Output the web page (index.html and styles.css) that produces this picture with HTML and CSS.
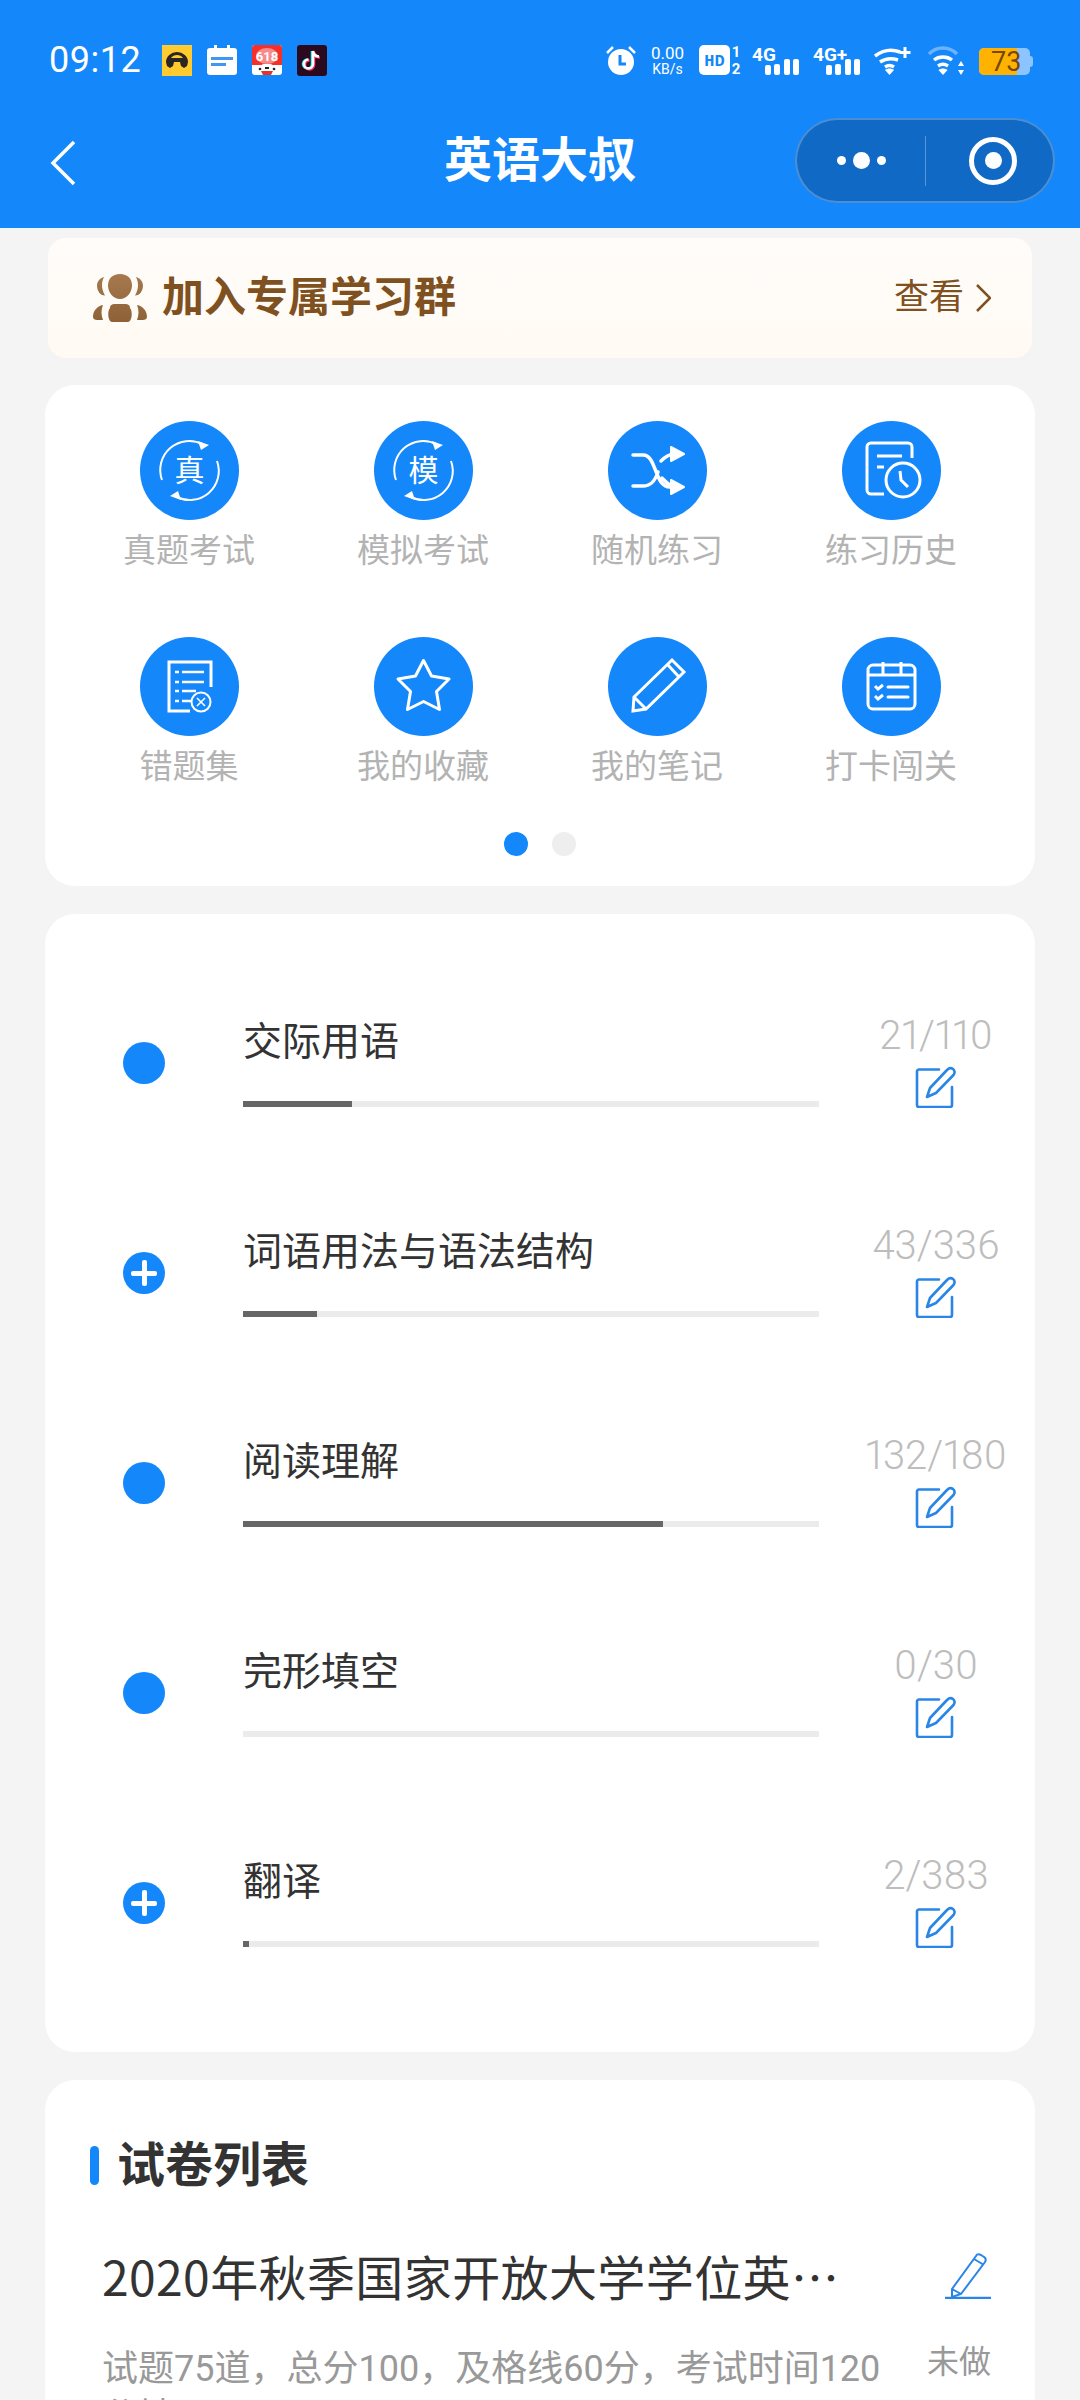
FILE: index.html
```html
<!DOCTYPE html>
<html lang="zh-CN">
<head>
    <meta charset="UTF-8">
    <meta name="viewport" content="width=device-width, initial-scale=1.0">
    <title>英语大叔</title>
    <link rel="stylesheet" href="styles.css">
</head>
<body>
    <svg class="sprites" width="0" height="0">
        <symbol id="edit" viewBox="0 0 42 42">
            <path d="M24 3.500H4a2 2 0 0 0-2 2V39a2 2 0 0 0 2 2h31a2 2 0 0 0 2-2V21" fill="none" stroke="#2a86e6" stroke-width="2.600" stroke-linecap="round"/>
            <path d="M12 31l3-9L32 4c2-2 4-2.500 6-1s2 4 .5 6L21 27z" fill="#fff" stroke="#2a86e6" stroke-width="2.600" stroke-linejoin="round"/>
        </symbol>
    </svg>

    <header class="top">
        <div class="status">
            <span class="time">09:12</span>
            <div class="apps">
                <svg width="30" height="31" viewBox="0 0 30 31"><rect width="30" height="31" fill="#ffcb30"/><path d="M4 17a11 10 0 0 1 22 0l-1 4-3 2-3-2-1-4h-6l-1 4-3 2-3-2z" fill="#2b2622"/><path d="M9 13a7 6 0 0 1 12 0z" fill="#ffcb30"/></svg>
                <svg width="30" height="30" viewBox="0 0 30 30"><rect y="3" width="30" height="27" rx="3" fill="#fff"/><rect x="7" width="3" height="6" fill="#fff"/><rect x="20" width="3" height="6" fill="#fff"/><rect x="4" y="12" width="22" height="3" fill="#3f97f2"/><rect x="4" y="18" width="15" height="3" fill="#3f97f2"/></svg>
                <svg width="30" height="30" viewBox="0 0 30 30"><rect width="30" height="30" rx="3" fill="#fff"/><path d="M0 3a3 3 0 0 1 3-3h24a3 3 0 0 1 3 3v17H0z" fill="#f5302a"/><ellipse cx="15" cy="11" rx="11" ry="8" fill="#f78a8a"/><text x="15" y="16" class="app-num">618</text><rect x="9" y="19" width="12" height="7" rx="3" fill="#fff"/><path d="M9 26h12l-2 4h-8z" fill="#e43328"/><circle cx="8" cy="24" r="1.300" fill="#222"/><circle cx="22" cy="24" r="1.300" fill="#222"/><rect x="13" y="22" width="4" height="2" fill="#222"/></svg>
                <svg width="30" height="31" viewBox="0 0 30 31"><rect width="30" height="31" rx="3" fill="#2a0a1f"/><path d="M16 6v13a4.500 4.500 0 1 1-4.500-4.500M16 6c.5 3.500 3 5.500 6 5.500" fill="none" stroke="#25e5e5" stroke-width="2.600" transform="translate(-1 0)"/><path d="M16 6v13a4.500 4.500 0 1 1-4.500-4.500M16 6c.5 3.500 3 5.500 6 5.500" fill="none" stroke="#ff2d55" stroke-width="2.600" transform="translate(1 1)"/><path d="M16 6v13a4.500 4.500 0 1 1-4.500-4.500M16 6c.5 3.500 3 5.500 6 5.500" fill="none" stroke="#fff" stroke-width="2.600"/></svg>
            </div>
            <div class="indicators">
                <svg width="30" height="30" viewBox="0 0 30 30"><circle cx="15" cy="17" r="13" fill="#fff"/><path d="M14 10v9h6" fill="none" stroke="#1487fb" stroke-width="3"/><path d="M1 8l6-6M29 8l-6-6" stroke="#fff" stroke-width="2.500"/></svg>
                <div class="speed"><span class="speed-num">0.00</span><span class="speed-unit">KB/s</span></div>
                <svg width="42" height="30" viewBox="0 0 42 30"><rect width="31" height="30" rx="5" fill="#fff"/><text x="15.500" y="21" class="hd-text">HD</text><text x="37" y="12" class="sim-num">1</text><text x="37" y="29" class="sim-num">2</text></svg>
                <svg class="ind-net" width="48" height="30" viewBox="0 0 48 30"><text x="0" y="16" class="net-text">4G</text><rect x="13" y="20" width="6" height="10" rx="2" fill="#fff"/><rect x="22" y="19" width="6" height="11" rx="2" fill="#fff"/><rect x="32" y="14" width="6" height="16" rx="2" fill="#fff"/><rect x="41" y="14" width="6" height="16" rx="2" fill="#fff"/></svg>
                <svg class="ind-net2" width="48" height="30" viewBox="0 0 48 30"><text x="0" y="16" class="net-text">4G+</text><rect x="13" y="20" width="6" height="10" rx="2" fill="#fff"/><rect x="22" y="19" width="6" height="11" rx="2" fill="#fff"/><rect x="32" y="14" width="6" height="16" rx="2" fill="#fff"/><rect x="41" y="14" width="6" height="16" rx="2" fill="#fff"/></svg>
                <svg class="ind-wifi" width="37" height="30" viewBox="0 0 37 30"><path d="M1 11c8-6 17-7 25-4M6 17c6-4 12-4 18-2M11 22c3-2 6-2 9 0" fill="none" stroke="#fff" stroke-width="3.500"/><path d="M15.500 30l-4.500-5c2.500-2 6.500-2 9 0z" fill="#fff"/><path d="M31 2v11M25.500 7.500h11" stroke="#fff" stroke-width="3"/></svg>
                <svg class="ind-wifi2" width="37" height="30" viewBox="0 0 37 30"><path d="M1 9c8-8 20-8 28 0" fill="none" stroke="#6db3fb" stroke-width="3.500"/><path d="M6 15c5-4 13-4 18 0M10 21c3-2 7-2 10 0" fill="none" stroke="#fff" stroke-width="3.500"/><path d="M15 30l-4.500-5c2.500-2 6.500-2 9 0z" fill="#fff"/><path d="M33 16l-3 5h6zM33 30l-3-5h6z" fill="#fff"/></svg>
                <div class="battery"><div class="battery-fill"></div><span class="battery-num">73</span><i class="battery-cap"></i></div>
            </div>
        </div>
        <div class="nav">
            <svg class="back" width="28" height="48" viewBox="0 0 28 48"><path d="M25 3L4 24l21 21" fill="none" stroke="#fff" stroke-width="3.500"/></svg>
            <h1 class="nav-title">英语大叔</h1>
            <div class="capsule">
                <div class="capsule-more"><i class="dot-s"></i><i class="dot-b"></i><i class="dot-s"></i></div>
                <div class="capsule-line"></div>
                <div class="capsule-target"><i></i></div>
            </div>
        </div>
    </header>

    <main class="page">
        <div class="banner">
            <div class="banner-left">
                <svg width="54" height="48" viewBox="0 0 54 48">
                    <defs><linearGradient id="bn" x1="0" y1="0" x2="0" y2="1"><stop offset="0" stop-color="#a67a4e"/><stop offset="1" stop-color="#8d6236"/></linearGradient></defs>
                    <path d="M27 0c8 0 12 5 12 11.500S34 25 27 25s-12-7-12-13.500S19 0 27 0zM11 3c-1.500 3-2 5.500-2 8.500s1 6.500 3 10c-5 0-8-5-8-10 0-4 3-7.500 7-8.500zM43 3c1.500 3 2 5.500 2 8.500s-1 6.500-3 10c5 0 8-5 8-10 0-4-3-7.500-7-8.500zM17 34c0-3 2-4 5-4h10c3 0 5 1 5 4 3 3 2 14-2 14H19c-4 0-5-11-2-14zM10 31c-6 1-10 6-10 12 0 2 2 3 4 3h6c-2-5-2-10 0-15zM44 31c6 1 10 6 10 12 0 2-2 3-4 3h-6c2-5 2-10 0-15z" fill="url(#bn)"/>
                </svg>
                <span class="banner-text">加入专属学习群</span>
            </div>
            <div class="banner-right">
                <span>查看</span>
                <svg width="15" height="28" viewBox="0 0 15 28"><path d="M1 1l13 13L1 27" fill="none" stroke="#7f5020" stroke-width="2.500"/></svg>
            </div>
        </div>

        <section class="card menu">
            <div class="menu-grid">
                <div class="menu-item">
                    <div class="menu-icon">
                        <svg width="99" height="99" viewBox="0 0 99 99"><path d="M22 59A29 29 0 0 1 63 23.500M77 40A29 29 0 0 1 36 75.500" fill="none" stroke="#fff" stroke-width="2"/><path d="M58 20l11 4-8 5zM41 79l-11-4 8-5z" fill="#fff"/><text x="49.500" y="60" class="menu-glyph">真</text></svg>
                    </div>
                    <span class="menu-label">真题考试</span>
                </div>
                <div class="menu-item">
                    <div class="menu-icon">
                        <svg width="99" height="99" viewBox="0 0 99 99"><path d="M22 59A29 29 0 0 1 63 23.500M77 40A29 29 0 0 1 36 75.500" fill="none" stroke="#fff" stroke-width="2"/><path d="M58 20l11 4-8 5zM41 79l-11-4 8-5z" fill="#fff"/><text x="49.500" y="60" class="menu-glyph">模</text></svg>
                    </div>
                    <span class="menu-label">模拟考试</span>
                </div>
                <div class="menu-item">
                    <div class="menu-icon">
                        <svg width="99" height="99" viewBox="0 0 99 99"><path d="M25 34h10c14 0 11 32 27 32h2M25 65h10c8 0 12-5 15-14M53 40c3-3 6-6 12-7M54 57c3 3 6 7 12 9" fill="none" stroke="#fff" stroke-width="3.500" stroke-linecap="round"/><path d="M63 26v14l13-7zM63 59v14l13-7z" fill="#fff" stroke="#fff" stroke-linejoin="round" stroke-width="2"/></svg>
                    </div>
                    <span class="menu-label">随机练习</span>
                </div>
                <div class="menu-item">
                    <div class="menu-icon">
                        <svg width="99" height="99" viewBox="0 0 99 99"><path d="M42 73H29a4 4 0 0 1-4-4V26a4 4 0 0 1 4-4h37a4 4 0 0 1 4 4v11" fill="none" stroke="#fff" stroke-width="3"/><path d="M35 35h25M35 46h7" stroke="#fff" stroke-width="3"/><circle cx="61" cy="59" r="17" fill="#1487fb" stroke="#fff" stroke-width="3"/><path d="M58 50l1 9 7 7" fill="none" stroke="#fff" stroke-width="3"/></svg>
                    </div>
                    <span class="menu-label">练习历史</span>
                </div>
                <div class="menu-item">
                    <div class="menu-icon">
                        <svg width="99" height="99" viewBox="0 0 99 99"><path d="M71 50V25H29v49h21" fill="none" stroke="#fff" stroke-width="3"/><path d="M35 35h4M42 35h22M35 45h4M42 45h22M35 54h4M42 54h14M35 64h4M42 64h9" stroke="#fff" stroke-width="2.400"/><circle cx="61" cy="65" r="9.500" fill="none" stroke="#fff" stroke-width="2"/><path d="M57 61l8 8M65 61l-8 8" stroke="#fff" stroke-width="1.600"/></svg>
                    </div>
                    <span class="menu-label">错题集</span>
                </div>
                <div class="menu-item">
                    <div class="menu-icon">
                        <svg width="99" height="99" viewBox="0 0 99 99"><path d="M49.500 23.500l8 15.500 17.500 3-12.500 12.500 3 18-16-8-16 8 3-18L24 42l17.500-3z" fill="none" stroke="#fff" stroke-width="3" stroke-linejoin="round"/></svg>
                    </div>
                    <span class="menu-label">我的收藏</span>
                </div>
                <div class="menu-item">
                    <div class="menu-icon">
                        <svg width="99" height="99" viewBox="0 0 99 99"><path d="M26 60l38-37 12 12-38 37-13 2zM26 60l12 12M60 28l11 12" fill="none" stroke="#fff" stroke-width="3"/></svg>
                    </div>
                    <span class="menu-label">我的笔记</span>
                </div>
                <div class="menu-item">
                    <div class="menu-icon">
                        <svg width="99" height="99" viewBox="0 0 99 99"><rect x="26" y="28" width="47" height="44" rx="5" fill="none" stroke="#fff" stroke-width="3"/><path d="M26 38h47M41 25v13M59 25v13" stroke="#fff" stroke-width="3"/><path d="M33 49l3 3 5-4M33 59l3 3 5-4" fill="none" stroke="#fff" stroke-width="3"/><path d="M46 50h20M46 60h20" stroke="#fff" stroke-width="3" stroke-linecap="round"/></svg>
                    </div>
                    <span class="menu-label">打卡闯关</span>
                </div>
            </div>
            <div class="pager"><i class="on"></i><i></i></div>
        </section>

        <section class="card topics">
            <div class="topic">
                <div class="topic-dot"></div>
                <div class="topic-main">
                    <div class="topic-name">交际用语</div>
                    <div class="bar"><div class="bar-fill" style="width:18.900%"></div></div>
                </div>
                <div class="topic-side">
                    <span class="topic-count">21/110</span>
                    <svg width="42" height="42"><use href="#edit"/></svg>
                </div>
            </div>
            <div class="topic">
                <div class="topic-dot plus"></div>
                <div class="topic-main">
                    <div class="topic-name">词语用法与语法结构</div>
                    <div class="bar"><div class="bar-fill" style="width:12.800%"></div></div>
                </div>
                <div class="topic-side">
                    <span class="topic-count">43/336</span>
                    <svg width="42" height="42"><use href="#edit"/></svg>
                </div>
            </div>
            <div class="topic">
                <div class="topic-dot"></div>
                <div class="topic-main">
                    <div class="topic-name">阅读理解</div>
                    <div class="bar"><div class="bar-fill" style="width:73%"></div></div>
                </div>
                <div class="topic-side">
                    <span class="topic-count">132/180</span>
                    <svg width="42" height="42"><use href="#edit"/></svg>
                </div>
            </div>
            <div class="topic">
                <div class="topic-dot"></div>
                <div class="topic-main">
                    <div class="topic-name">完形填空</div>
                    <div class="bar"><div class="bar-fill" style="width:0%"></div></div>
                </div>
                <div class="topic-side">
                    <span class="topic-count">0/30</span>
                    <svg width="42" height="42"><use href="#edit"/></svg>
                </div>
            </div>
            <div class="topic">
                <div class="topic-dot plus"></div>
                <div class="topic-main">
                    <div class="topic-name">翻译</div>
                    <div class="bar"><div class="bar-fill" style="width:1%"></div></div>
                </div>
                <div class="topic-side">
                    <span class="topic-count">2/383</span>
                    <svg width="42" height="42"><use href="#edit"/></svg>
                </div>
            </div>
        </section>

        <section class="card papers">
            <h2 class="papers-title">试卷列表</h2>
            <div class="paper">
                <div class="paper-text">
                    <div class="paper-name">2020年秋季国家开放大学学位英…</div>
                    <div class="paper-info">试题75道，总分100，及格线60分，考试时间120分钟</div>
                </div>
                <div class="paper-side">
                    <svg width="46" height="46" viewBox="0 0 46 46"><path d="M7 36L31 3c1-2 3-2 5-1l3 2c2 1 2 3 1 5L16 41l-9 3zM7 36l9 5M29 6l10 6" fill="none" stroke="#2a86e6" stroke-width="2"/><path d="M0 45h46" stroke="#2a86e6" stroke-width="2.500"/></svg>
                    <span class="paper-state">未做</span>
                </div>
            </div>
        </section>
    </main>
</body>
</html>
```
FILE: styles.css
```css
* {
    box-sizing: border-box;
}
body {
    margin: 0;
    width: 1080px;
    height: 2400px;
    overflow: hidden;
    background: #f4f4f4;
    font-family: Roboto, 'Noto Sans CJK SC', sans-serif;
    color: #333;
}
.sprites {
    display: block;
    height: 0;
}
.top {
    height: 228px;
    background: #1487fb;
    color: #fff;
}
.status {
    height: 90px;
    padding: 45px 0 0 49px;
    display: flex;
    align-items: flex-start;
}
.time {
    width: 113px;
    flex: none;
    font-size: 36px;
    line-height: 30px;
    letter-spacing: .5px;
}
.apps {
    display: flex;
    flex: none;
    gap: 15px;
}
.apps svg {
    display: block;
}
.app-num {
    font: 700 13px Roboto, sans-serif;
    fill: #fff;
    text-anchor: middle;
}
.indicators {
    margin-left: 279px;
    flex: none;
    display: flex;
    align-items: flex-start;
}
.indicators svg {
    display: block;
    flex: none;
}
.speed {
    width: 37px;
    margin: 0 13px;
    flex: none;
    display: flex;
    flex-direction: column;
    align-items: center;
    white-space: nowrap;
}
.speed-num {
    font-size: 17px;
    line-height: 17px;
}
.speed-unit {
    font-size: 14px;
    line-height: 15px;
}
.hd-text {
    font: 700 17px 'Liberation Mono', monospace;
    fill: #1487fb;
    text-anchor: middle;
}
.sim-num {
    font: 700 15px Roboto, sans-serif;
    fill: #fff;
    text-anchor: middle;
}
.net-text {
    font: 700 19px Roboto, sans-serif;
    fill: #fff;
}
.ind-net {
    margin-left: 11px;
}
.ind-net2 {
    margin-left: 13px;
}
.ind-wifi {
    margin-left: 13px;
}
.ind-wifi2 {
    margin-left: 17px;
}
.battery {
    position: relative;
    width: 51px;
    height: 27px;
    margin: 3px 0 0 14px;
    flex: none;
    border-radius: 5px;
    background: #8cc4fd;
}
.battery-fill {
    width: 38px;
    height: 27px;
    border-radius: 5px 0 0 5px;
    background: #ffb300;
}
.battery-num {
    position: absolute;
    left: 12px;
    top: 0;
    font-size: 27px;
    line-height: 28px;
    color: #73480a;
}
.battery-cap {
    position: absolute;
    right: -3px;
    top: 8px;
    width: 3px;
    height: 11px;
    border-radius: 0 3px 3px 0;
    background: #8cc4fd;
}
.nav {
    height: 138px;
    position: relative;
    display: flex;
    align-items: center;
    justify-content: center;
    padding-top: 4px;
}
.back {
    position: absolute;
    left: 49px;
    top: 49px;
}
.nav-title {
    margin: 0;
    font-size: 48px;
    line-height: 60px;
    font-weight: 700;
}
.capsule {
    position: absolute;
    left: 795px;
    top: 28px;
    width: 260px;
    height: 85px;
    display: flex;
    align-items: center;
    border: 2px solid rgba(255, 255, 255, .25);
    border-radius: 43px;
    background: #1069c4;
}
.capsule-more {
    width: 128px;
    display: flex;
    align-items: center;
    justify-content: center;
    gap: 7px;
}
.capsule-more i {
    display: block;
    border-radius: 50%;
    background: #fff;
}
.dot-s {
    width: 9px;
    height: 9px;
}
.dot-b {
    width: 17px;
    height: 17px;
}
.capsule-line {
    width: 1px;
    height: 50px;
    background: rgba(255, 255, 255, .3);
}
.capsule-target {
    width: 48px;
    height: 48px;
    margin-left: 43px;
    display: flex;
    align-items: center;
    justify-content: center;
    border: 5px solid #fff;
    border-radius: 50%;
}
.capsule-target i {
    display: block;
    width: 17px;
    height: 17px;
    border-radius: 50%;
    background: #fff;
}
.page {
    padding: 10px 45px 0;
}
.banner {
    height: 120px;
    margin: 0 3px 27px;
    padding: 0 41px 0 45px;
    display: flex;
    align-items: center;
    justify-content: space-between;
    border-radius: 18px;
    background: linear-gradient(#fffcfa, #fffaf3);
    color: #7f5020;
}
.banner-left {
    display: flex;
    align-items: center;
    gap: 15px;
}
.banner-left svg {
    display: block;
}
.banner-text {
    font-size: 42px;
    line-height: 50px;
    font-weight: 700;
}
.banner-right {
    display: flex;
    align-items: center;
    gap: 12px;
    font-size: 35px;
    line-height: 50px;
}
.banner-right svg {
    display: block;
}
.card {
    margin-bottom: 28px;
    border-radius: 30px;
    background: #fff;
}
.menu {
    height: 501px;
    padding: 36px 27px 30px;
}
.menu-grid {
    display: grid;
    grid-template-columns: repeat(4, 234px);
    row-gap: 63px;
}
.menu-item {
    display: flex;
    flex-direction: column;
    align-items: center;
}
.menu-icon {
    width: 99px;
    height: 99px;
    border-radius: 50%;
    background: #1487fb;
}
.menu-icon svg {
    display: block;
}
.menu-glyph {
    font: 30px 'Noto Sans CJK SC', sans-serif;
    fill: #fff;
    text-anchor: middle;
}
.menu-label {
    margin-top: 8px;
    font-size: 33px;
    line-height: 46px;
    color: #b3b3b3;
}
.pager {
    margin-top: 42px;
    display: flex;
    justify-content: center;
    gap: 24px;
}
.pager i {
    display: block;
    width: 24px;
    height: 24px;
    border-radius: 50%;
    background: #eee;
}
.pager .on {
    background: #1487fb;
}
.topics {
    padding: 44px 15px 44px 78px;
}
.topic {
    height: 210px;
    display: flex;
    align-items: center;
}
.topic-dot {
    position: relative;
    width: 42px;
    height: 42px;
    flex: none;
    border-radius: 50%;
    background: #1487fb;
}
.topic-dot.plus::before,
.topic-dot.plus::after {
    content: "";
    position: absolute;
    background: #fff;
    border-radius: 2px;
}
.topic-dot.plus::before {
    left: 8px;
    top: 18.500px;
    width: 26px;
    height: 5px;
}
.topic-dot.plus::after {
    left: 18.500px;
    top: 8px;
    width: 5px;
    height: 26px;
}
.topic-main {
    width: 576px;
    margin-left: 78px;
    padding-bottom: 2px;
    flex: none;
}
.topic-name {
    height: 50px;
    margin-bottom: 34px;
    font-size: 39px;
    line-height: 50px;
}
.bar {
    height: 6px;
    background: #ebebeb;
}
.bar-fill {
    height: 6px;
    background: #666;
}
.topic-side {
    width: 168px;
    margin-left: 33px;
    padding-bottom: 5px;
    flex: none;
    display: flex;
    flex-direction: column;
    align-items: center;
    gap: 7px;
}
.topic-side svg {
    display: block;
}
.topic-count {
    font-size: 40px;
    line-height: 46px;
    font-weight: 300;
    font-variant-numeric: proportional-nums;
    color: #bdbdbd;
}
.papers {
    height: 400px;
    padding: 61px 42px 0 45px;
}
.papers-title {
    position: relative;
    margin: 0 0 54px;
    padding-left: 27px;
    font-size: 48px;
    line-height: 50px;
    font-weight: 700;
    color: #333;
}
.papers-title::before {
    content: "";
    position: absolute;
    left: 0;
    top: 5px;
    width: 9px;
    height: 39px;
    border-radius: 5px;
    background: #1487fb;
}
.paper {
    display: flex;
    padding-left: 12px;
}
.paper-text {
    width: 790px;
    flex: none;
}
.paper-name {
    height: 60px;
    margin-bottom: 40px;
    font-size: 48px;
    line-height: 60px;
    letter-spacing: .4px;
    white-space: nowrap;
    font-family: 'Noto Sans CJK SC', sans-serif;
}
.paper-info {
    font-size: 36px;
    line-height: 48px;
    color: #999;
}
.paper-side {
    width: 66px;
    margin-left: 33px;
    flex: none;
    display: flex;
    flex-direction: column;
    align-items: flex-end;
}
.paper-side svg {
    display: block;
    margin: 8px 0 0 0;
}
.paper-state {
    margin-top: 40px;
    font-size: 32px;
    line-height: 46px;
    color: #999;
    white-space: nowrap;
}
```
